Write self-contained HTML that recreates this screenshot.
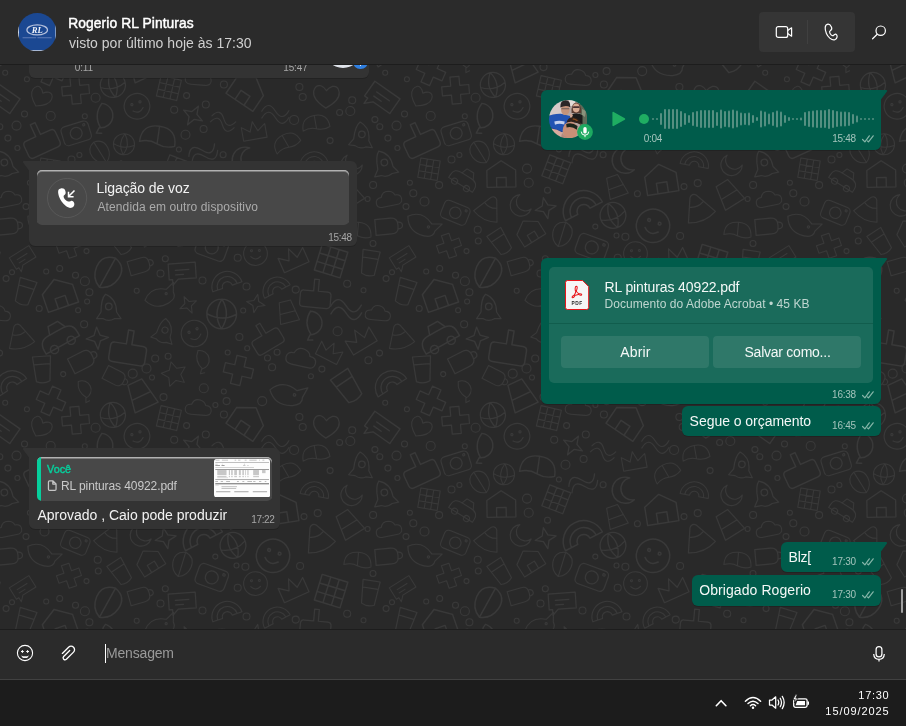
<!DOCTYPE html>
<html lang="pt-BR"><head><meta charset="utf-8"><title>WhatsApp</title>
<style>
html,body{margin:0;padding:0}
body{width:906px;height:726px;overflow:hidden;background:#292929;font-family:"Liberation Sans", sans-serif;position:relative}
.a{position:absolute;display:block}
.t{position:absolute;white-space:nowrap;display:block}
.card{background:#484848;border-radius:5px;box-shadow:inset 0 1px 0 #b2b2b2,inset 0 2px 0 #7c7c7c}
.btn{background:#2f7869;border-radius:4px}
#chat{position:absolute;left:0;top:65px;width:906px;height:564px;overflow:hidden}
#chat>.in{position:absolute;left:0;top:-65px;width:906px;height:726px}
#root{position:absolute;left:0;top:0;width:906px;height:726px;will-change:transform}
</style></head><body>
<div id="root">
<svg class="a" style="left:0;top:65px" width="906" height="564">
<defs><pattern id="dd" width="380" height="330" patternUnits="userSpaceOnUse" patternTransform="translate(-30,-20)">
<g fill="none" stroke="#393939" stroke-width="1.05" stroke-linecap="round" stroke-linejoin="round"><g transform="translate(348.4 163.8) rotate(-23) scale(1.13)"><path d="M-13 8 l10 -20 q3 -3 6 0 l10 20 q-13 6 -26 0z M-6 -4 q6 3 12 0"/></g><g transform="translate(105.6 45.2) rotate(-5) scale(1.13)"><path d="M-4 -12 h8 v8 h8 v8 h-8 v8 h-8 v-8 h-8 v-8 h8z"/></g><g transform="translate(268.4 -4.5) rotate(13) scale(1.20)"><path d="M-4 -12 h8 v8 h8 v8 h-8 v8 h-8 v-8 h-8 v-8 h8z"/></g><g transform="translate(268.4 325.5) rotate(13) scale(1.20)"><path d="M-4 -12 h8 v8 h8 v8 h-8 v8 h-8 v-8 h-8 v-8 h8z"/></g><g transform="translate(69.3 93.0) rotate(-25) scale(1.32)"><path d="M-2 -12 h4 v10 h8 q3 0 3 3 v8 q0 3 -3 3 h-20 q-3 0 -3 -3 v-8 q0 -3 3 -3 h8z"/></g><g transform="translate(231.7 105.1) rotate(-26) scale(1.19)"><path d="M-12 0 q6 -10 12 0 q6 10 12 0 M-12 6 q6 -10 12 0 q6 10 12 0"/></g><g transform="translate(-18.9 216.1) rotate(17) scale(1.34)"><path d="M-10 -10 l20 0 0 20 -20 0z M-10 -3.300 h20 M-10 3.300 h20 M-3.300 -10 v20 M3.300 -10 v20"/></g><g transform="translate(361.1 216.1) rotate(17) scale(1.34)"><path d="M-10 -10 l20 0 0 20 -20 0z M-10 -3.300 h20 M-10 3.300 h20 M-3.300 -10 v20 M3.300 -10 v20"/></g><g transform="translate(331.0 -15.9) rotate(13) scale(1.16)"><path d="M-7 6 q-6 0 -6 -5 q0 -5 6 -5 q2 -6 8 -5 q5 1 6 5 q6 0 6 5 q0 5 -6 5z"/></g><g transform="translate(331.0 314.1) rotate(13) scale(1.16)"><path d="M-7 6 q-6 0 -6 -5 q0 -5 6 -5 q2 -6 8 -5 q5 1 6 5 q6 0 6 5 q0 5 -6 5z"/></g><g transform="translate(151.3 130.1) rotate(-1) scale(1.20)"><path d="M-12 -4 l12 -8 12 8 v14 h-24z M-4 10 v-8 h8 v8"/></g><g transform="translate(72.4 -5.1) rotate(-4) scale(1.13)"><path d="M-8 -12 h16 l-2 22 q-6 3 -12 0z M-7 -5 h14"/></g><g transform="translate(72.4 324.9) rotate(-4) scale(1.13)"><path d="M-8 -12 h16 l-2 22 q-6 3 -12 0z M-7 -5 h14"/></g><g transform="translate(228.3 33.8) rotate(5) scale(1.00)"><path d="M-7 6 q-6 0 -6 -5 q0 -5 6 -5 q2 -6 8 -5 q5 1 6 5 q6 0 6 5 q0 5 -6 5z"/></g><g transform="translate(79.0 124.2) rotate(9) scale(0.98)"><path d="M-10 -10 l20 0 0 20 -20 0z M-10 -3.300 h20 M-10 3.300 h20 M-3.300 -10 v20 M3.300 -10 v20"/></g><g transform="translate(228.9 156.5) rotate(-27) scale(1.38)"><path d="M-15 8 a15 15 0 0 1 30 0 M-10 8 a10 10 0 0 1 20 0 M-5 8 a5 5 0 0 1 10 0 M-15 8 h10 M5 8 h10"/></g><g transform="translate(54.8 247.4) rotate(17) scale(1.09)"><path d="M-8 -12 h16 l-2 22 q-6 3 -12 0z M-7 -5 h14"/></g><g transform="translate(263.0 170.4) rotate(-21) scale(1.17)"><path d="M-11 0 a11 11 0 1 0 22 0 a11 11 0 1 0 -22 0 M-11 0 q11 6 22 0 M0 -11 q-7 11 0 22 M0 -11 q7 11 0 22"/></g><g transform="translate(137.5 227.7) rotate(29) scale(1.38)"><path d="M0 -12 q10 2 9 12 q-1 9 -9 12 q-8 -3 -9 -12 q-1 -10 9 -12z M0 -12 v24"/></g><g transform="translate(135.2 73.5) rotate(3) scale(1.36)"><path d="M-3 -11 a9 9 0 1 1 -1 18 l-2 4 h4 M-3 -11 q-6 9 0 18"/></g><g transform="translate(241.8 202.4) rotate(20) scale(1.18)"><rect x="-13" y="-9" width="26" height="18" rx="4"/><circle r="5.500"/><circle cx="9" cy="-5.500" r="1"/></g><g transform="translate(305.3 66.0) rotate(-1) scale(1.13)"><path d="M-12 0 q6 -10 12 0 q6 10 12 0 M-12 6 q6 -10 12 0 q6 10 12 0"/></g><g transform="translate(-4.0 260.7) rotate(-2) scale(1.28)"><path d="M-12 0 q6 -10 12 0 q6 10 12 0 M-12 6 q6 -10 12 0 q6 10 12 0"/></g><g transform="translate(376.0 260.7) rotate(-2) scale(1.28)"><path d="M-12 0 q6 -10 12 0 q6 10 12 0 M-12 6 q6 -10 12 0 q6 10 12 0"/></g><g transform="translate(274.8 115.3) rotate(33) scale(1.31)"><path d="M-2 -10 a10 10 0 1 0 12 12 a8 8 0 0 1 -12 -12z"/></g><g transform="translate(38.8 155.1) rotate(-11) scale(0.99)"><path d="M-7 6 q-6 0 -6 -5 q0 -5 6 -5 q2 -6 8 -5 q5 1 6 5 q6 0 6 5 q0 5 -6 5z"/></g><g transform="translate(345.5 113.5) rotate(10) scale(0.95)"><path d="M-15 8 a15 15 0 0 1 30 0 M-10 8 a10 10 0 0 1 20 0 M-5 8 a5 5 0 0 1 10 0 M-15 8 h10 M5 8 h10"/></g><g transform="translate(32.3 52.4) rotate(35) scale(1.28)"><path d="M-12 -7 h24 v14 h-16 l-5 5 v-5 h-3z M-6 -1 h12 M-6 3 h7"/></g><g transform="translate(356.2 51.5) rotate(3) scale(1.16)"><path d="M0 10 q-12 -7 -11 -14 q1 -6 6 -5 q3 1 5 4 q2 -3 5 -4 q5 -1 6 5 q1 7 -11 14z"/></g><g transform="translate(303.8 239.7) rotate(-28) scale(0.96)"><path d="M-15 8 a15 15 0 0 1 30 0 M-10 8 a10 10 0 0 1 20 0 M-5 8 a5 5 0 0 1 10 0 M-15 8 h10 M5 8 h10"/></g><g transform="translate(190.4 252.0) rotate(-12) scale(1.05)"><path d="M-15 0 q8 -12 22 -6 l8 -5 -2 9 q2 6 -6 9 q-14 5 -22 -7z"/><circle cx="6" cy="-2" r="1"/></g><g transform="translate(317.0 20.1) rotate(17) scale(1.19)"><path d="M-15 0 q8 -12 22 -6 l8 -5 -2 9 q2 6 -6 9 q-14 5 -22 -7z"/><circle cx="6" cy="-2" r="1"/></g><g transform="translate(317.0 350.1) rotate(17) scale(1.19)"><path d="M-15 0 q8 -12 22 -6 l8 -5 -2 9 q2 6 -6 9 q-14 5 -22 -7z"/><circle cx="6" cy="-2" r="1"/></g><g transform="translate(251.7 269.0) rotate(1) scale(1.35)"><path d="M-11 0 a11 11 0 1 0 22 0 a11 11 0 1 0 -22 0 M-11 0 q11 6 22 0 M0 -11 q-7 11 0 22 M0 -11 q7 11 0 22"/></g><g transform="translate(194.0 288.0) rotate(19) scale(1.02)"><path d="M-3 -14 q10 4 10 16 l4 6 h-6 q-5 3 -10 0 h-6 l4 -6 q0 -12 4 -16z"/><circle cy="-3" r="3"/></g><g transform="translate(295.1 291.5) rotate(-31) scale(1.17)"><path d="M-2 -12 h4 v10 h8 q3 0 3 3 v8 q0 3 -3 3 h-20 q-3 0 -3 -3 v-8 q0 -3 3 -3 h8z"/></g><g transform="translate(10.6 295.0) rotate(-31) scale(1.15)"><path d="M-12 8 v-14 l8 6 4 -10 4 10 8 -6 v14z"/></g><g transform="translate(390.6 295.0) rotate(-31) scale(1.15)"><path d="M-12 8 v-14 l8 6 4 -10 4 10 8 -6 v14z"/></g><g transform="translate(105.3 167.7) rotate(22) scale(1.04)"><rect x="-13" y="-9" width="26" height="18" rx="4"/><circle r="5.500"/><circle cx="9" cy="-5.500" r="1"/></g><g transform="translate(253.8 73.8) rotate(14) scale(1.02)"><path d="M-12 0 q6 -10 12 0 q6 10 12 0 M-12 6 q6 -10 12 0 q6 10 12 0"/></g><g transform="translate(35.0 120.8) rotate(-11) scale(1.11)"><path d="M-3 -14 q10 4 10 16 l4 6 h-6 q-5 3 -10 0 h-6 l4 -6 q0 -12 4 -16z"/><circle cy="-3" r="3"/></g><g transform="translate(112.3 -12.9) rotate(-27) scale(1.18)"><path d="M-10 -8 h14 q6 0 6 6 v2 q0 6 -6 6 h-14z M10 -4 q4 0 4 3 q0 3 -4 3"/></g><g transform="translate(112.3 317.1) rotate(-27) scale(1.18)"><path d="M-10 -8 h14 q6 0 6 6 v2 q0 6 -6 6 h-14z M10 -4 q4 0 4 3 q0 3 -4 3"/></g><g transform="translate(86.9 289.2) rotate(-29) scale(1.36)"><path d="M-14 6 q0 -8 8 -8 h12 q8 0 8 8 v3 h-28z"/><circle cx="-7" cy="9" r="3"/><circle cx="7" cy="9" r="3"/><path d="M-5 -2 l2 -6 h8 l3 6"/></g><g transform="translate(195.6 163.2) rotate(-12) scale(1.19)"><path d="M0 -9 l2.400 6.600 6.600 2.400 -6.600 2.400 -2.400 6.600 -2.400 -6.600 -6.600 -2.400 6.600 -2.400z"/></g><g transform="translate(99.0 200.7) rotate(-19) scale(0.99)"><path d="M-4 -12 h8 v8 h8 v8 h-8 v8 h-8 v-8 h-8 v-8 h8z"/></g><g transform="translate(158.7 302.1) rotate(9) scale(1.40)"><path d="M-2 -12 h4 v10 h8 q3 0 3 3 v8 q0 3 -3 3 h-20 q-3 0 -3 -3 v-8 q0 -3 3 -3 h8z"/></g><g transform="translate(169.4 221.8) rotate(-16) scale(1.04)"><path d="M-10 -8 h14 q6 0 6 6 v2 q0 6 -6 6 h-14z M10 -4 q4 0 4 3 q0 3 -4 3"/></g><g transform="translate(-2.1 12.2) rotate(-34) scale(1.31)"><path d="M-8 -12 h16 l-2 22 q-6 3 -12 0z M-7 -5 h14"/></g><g transform="translate(-2.1 342.2) rotate(-34) scale(1.31)"><path d="M-8 -12 h16 l-2 22 q-6 3 -12 0z M-7 -5 h14"/></g><g transform="translate(377.9 12.2) rotate(-34) scale(1.31)"><path d="M-8 -12 h16 l-2 22 q-6 3 -12 0z M-7 -5 h14"/></g><g transform="translate(377.9 342.2) rotate(-34) scale(1.31)"><path d="M-8 -12 h16 l-2 22 q-6 3 -12 0z M-7 -5 h14"/></g><g transform="translate(277.0 46.1) rotate(34) scale(1.35)"><path d="M-12 -4 l12 -8 12 8 v14 h-24z M-4 10 v-8 h8 v8"/></g><g transform="translate(1.4 120.2) rotate(-12) scale(1.07)"><path d="M-2 -10 a10 10 0 1 0 12 12 a8 8 0 0 1 -12 -12z"/></g><g transform="translate(381.4 120.2) rotate(-12) scale(1.07)"><path d="M-2 -10 a10 10 0 1 0 12 12 a8 8 0 0 1 -12 -12z"/></g><g transform="translate(187.8 93.8) rotate(8) scale(1.27)"><path d="M-14 4 q0 -14 14 -14 q14 0 14 14 q-7 3 -14 0 q-7 -3 -14 0z M0 -10 v14"/></g><g transform="translate(345.8 248.4) rotate(5) scale(1.18)"><path d="M-2 -12 h4 v10 h8 q3 0 3 3 v8 q0 3 -3 3 h-20 q-3 0 -3 -3 v-8 q0 -3 3 -3 h8z"/></g><g transform="translate(89.2 249.6) rotate(-19) scale(1.33)"><path d="M-12 -4 l12 -8 12 8 v14 h-24z M-4 10 v-8 h8 v8"/></g><g transform="translate(284.0 86.4) rotate(-10) scale(0.99)"><path d="M-12 8 v-14 l8 6 4 -10 4 10 8 -6 v14z"/></g><g transform="translate(138.8 164.3) rotate(26) scale(1.00)"><path d="M-13 8 l10 -20 q3 -3 6 0 l10 20 q-13 6 -26 0z M-6 -4 q6 3 12 0"/></g><g transform="translate(142.9 39.9) rotate(-12) scale(1.14)"><path d="M-11 0 a11 11 0 1 0 22 0 a11 11 0 1 0 -22 0 M-11 0 q11 6 22 0 M0 -11 q-7 11 0 22 M0 -11 q7 11 0 22"/></g><g transform="translate(19.6 218.5) rotate(9) scale(1.08)"><path d="M-8 -12 h16 l-2 22 q-6 3 -12 0z M-7 -5 h14"/></g><g transform="translate(204.2 -1.2) rotate(-15) scale(0.95)"><path d="M0 -13 l4 8 9 1 -6.500 6.500 1.500 9 -8 -4.300 -8 4.300 1.500 -9 -6.500 -6.500 9 -1z"/></g><g transform="translate(204.2 328.8) rotate(-15) scale(0.95)"><path d="M0 -13 l4 8 9 1 -6.500 6.500 1.500 9 -8 -4.300 -8 4.300 1.500 -9 -6.500 -6.500 9 -1z"/></g><g transform="translate(106.2 88.3) rotate(-17) scale(1.08)"><rect x="-13" y="-9" width="26" height="18" rx="4"/><circle r="5.500"/><circle cx="9" cy="-5.500" r="1"/></g><g transform="translate(167.0 61.3) rotate(-19) scale(1.07)"><circle r="12"/><path d="M-5 3 q5 5 10 0"/><circle cx="-4" cy="-3" r="1"/><circle cx="4" cy="-3" r="1"/></g><g transform="translate(311.2 135.0) rotate(-9) scale(1.32)"><path d="M-12 -4 l12 -8 12 8 v14 h-24z M-4 10 v-8 h8 v8"/></g><g transform="translate(179.7 186.6) rotate(-32) scale(1.04)"><path d="M-12 -4 l12 -8 12 8 v14 h-24z M-4 10 v-8 h8 v8"/></g><g transform="translate(138.8 264.8) rotate(0) scale(1.11)"><path d="M-3 -14 q10 4 10 16 l4 6 h-6 q-5 3 -10 0 h-6 l4 -6 q0 -12 4 -16z"/><circle cy="-3" r="3"/></g><g transform="translate(50.0 292.3) rotate(-15) scale(1.00)"><path d="M-13 8 l10 -20 q3 -3 6 0 l10 20 q-13 6 -26 0z M-6 -4 q6 3 12 0"/></g><g transform="translate(233.8 -13.9) rotate(-14) scale(1.05)"><path d="M-3 -11 a9 9 0 1 1 -1 18 l-2 4 h4 M-3 -11 q-6 9 0 18"/></g><g transform="translate(233.8 316.1) rotate(-14) scale(1.05)"><path d="M-3 -11 a9 9 0 1 1 -1 18 l-2 4 h4 M-3 -11 q-6 9 0 18"/></g><g transform="translate(171.3 21.0) rotate(-25) scale(1.27)"><path d="M-10 10 l4 -22 h12 l4 22z M-8 0 h16"/></g><g transform="translate(70.5 52.5) rotate(29) scale(0.96)"><path d="M0 10 q-12 -7 -11 -14 q1 -6 6 -5 q3 1 5 4 q2 -3 5 -4 q5 -1 6 5 q1 7 -11 14z"/></g><g transform="translate(52.6 212.4) rotate(-32) scale(0.96)"><path d="M-12 -7 h24 v14 h-16 l-5 5 v-5 h-3z M-6 -1 h12 M-6 3 h7"/></g><g transform="translate(285.5 208.6) rotate(-2) scale(0.99)"><circle r="12"/><path d="M-5 3 q5 5 10 0"/><circle cx="-4" cy="-3" r="1"/><circle cx="4" cy="-3" r="1"/></g><g transform="translate(115.3 132.2) rotate(32) scale(1.00)"><path d="M-14 6 q0 -8 8 -8 h12 q8 0 8 8 v3 h-28z"/><circle cx="-7" cy="9" r="3"/><circle cx="7" cy="9" r="3"/><path d="M-5 -2 l2 -6 h8 l3 6"/></g><g transform="translate(81.0 25.9) rotate(24) scale(1.17)"><path d="M-4 -12 h8 v8 h8 v8 h-8 v8 h-8 v-8 h-8 v-8 h8z"/></g><g transform="translate(7.7 186.9) rotate(5) scale(0.97)"><path d="M-14 4 q0 -14 14 -14 q14 0 14 14 q-7 3 -14 0 q-7 -3 -14 0z M0 -10 v14"/></g><g transform="translate(387.7 186.9) rotate(5) scale(0.97)"><path d="M-14 4 q0 -14 14 -14 q14 0 14 14 q-7 3 -14 0 q-7 -3 -14 0z M0 -10 v14"/></g><g transform="translate(303.0 180.8) rotate(19) scale(1.39)"><circle r="12"/><path d="M-5 3 q5 5 10 0"/><circle cx="-4" cy="-3" r="1"/><circle cx="4" cy="-3" r="1"/></g><g transform="translate(11.5 92.6) rotate(7) scale(1.09)"><path d="M-3 -14 q10 4 10 16 l4 6 h-6 q-5 3 -10 0 h-6 l4 -6 q0 -12 4 -16z"/><circle cy="-3" r="3"/></g><g transform="translate(391.5 92.6) rotate(7) scale(1.09)"><path d="M-3 -14 q10 4 10 16 l4 6 h-6 q-5 3 -10 0 h-6 l4 -6 q0 -12 4 -16z"/><circle cy="-3" r="3"/></g><g transform="translate(223.0 70.5) rotate(30) scale(1.20)"><path d="M0 -9 l2.400 6.600 6.600 2.400 -6.600 2.400 -2.400 6.600 -2.400 -6.600 -6.600 -2.400 6.600 -2.400z"/></g><g transform="translate(-0.9 149.7) rotate(-32) scale(1.13)"><path d="M-10 10 l4 -22 h12 l4 22z M-8 0 h16"/></g><g transform="translate(379.1 149.7) rotate(-32) scale(1.13)"><path d="M-10 10 l4 -22 h12 l4 22z M-8 0 h16"/></g><g transform="translate(71.7 180.2) rotate(33) scale(1.10)"><path d="M-15 0 q8 -12 22 -6 l8 -5 -2 9 q2 6 -6 9 q-14 5 -22 -7z"/><circle cx="6" cy="-2" r="1"/></g><g transform="translate(37.4 5.1) rotate(-33) scale(1.13)"><path d="M-15 8 a15 15 0 0 1 30 0 M-10 8 a10 10 0 0 1 20 0 M-5 8 a5 5 0 0 1 10 0 M-15 8 h10 M5 8 h10"/></g><g transform="translate(37.4 335.1) rotate(-33) scale(1.13)"><path d="M-15 8 a15 15 0 0 1 30 0 M-10 8 a10 10 0 0 1 20 0 M-5 8 a5 5 0 0 1 10 0 M-15 8 h10 M5 8 h10"/></g><g transform="translate(144.0 2.5) rotate(27) scale(1.03)"><path d="M-10 -8 h14 q6 0 6 6 v2 q0 6 -6 6 h-14z M10 -4 q4 0 4 3 q0 3 -4 3"/></g><g transform="translate(144.0 332.5) rotate(27) scale(1.03)"><path d="M-10 -8 h14 q6 0 6 6 v2 q0 6 -6 6 h-14z M10 -4 q4 0 4 3 q0 3 -4 3"/></g><g transform="translate(254.7 234.0) rotate(-19) scale(1.03)"><path d="M-15 8 a15 15 0 0 1 30 0 M-10 8 a10 10 0 0 1 20 0 M-5 8 a5 5 0 0 1 10 0 M-15 8 h10 M5 8 h10"/></g><g transform="translate(345.9 80.0) rotate(-10) scale(0.97)"><path d="M-14 4 q0 -14 14 -14 q14 0 14 14 q-7 3 -14 0 q-7 -3 -14 0z M0 -10 v14"/></g><g transform="translate(27.9 269.4) rotate(5) scale(0.97)"><path d="M-7 6 q-6 0 -6 -5 q0 -5 6 -5 q2 -6 8 -5 q5 1 6 5 q6 0 6 5 q0 5 -6 5z"/></g><g transform="translate(212.2 226.0) rotate(-4) scale(1.13)"><path d="M-12 -7 h24 v14 h-16 l-5 5 v-5 h-3z M-6 -1 h12 M-6 3 h7"/></g><g transform="translate(323.1 214.1) rotate(-24) scale(1.12)"><path d="M-12 8 v-14 l8 6 4 -10 4 10 8 -6 v14z"/></g><g transform="translate(317.0 98.8) rotate(-30) scale(0.97)"><path d="M-14 4 q0 -14 14 -14 q14 0 14 14 q-7 3 -14 0 q-7 -3 -14 0z M0 -10 v14"/></g><g transform="translate(317.7 267.7) rotate(-14) scale(0.97)"><path d="M-10 10 l4 -22 h12 l4 22z M-8 0 h16"/></g><g transform="translate(206.3 124.3) rotate(21) scale(1.12)"><path d="M-10 -10 l20 0 0 20 -20 0z M-10 -3.300 h20 M-10 3.300 h20 M-3.300 -10 v20 M3.300 -10 v20"/></g><g transform="translate(116.1 15.0) rotate(-28) scale(1.01)"><path d="M-3 -11 a9 9 0 1 1 -1 18 l-2 4 h4 M-3 -11 q-6 9 0 18"/></g><g transform="translate(198.9 43.1) rotate(13) scale(1.04)"><path d="M-10 -10 l20 0 0 20 -20 0z M-10 -3.300 h20 M-10 3.300 h20 M-3.300 -10 v20 M3.300 -10 v20"/></g><g transform="translate(266.0 142.2) rotate(-20) scale(0.96)"><path d="M-10 10 l4 -22 h12 l4 22z M-8 0 h16"/></g><g transform="translate(224.4 288.5) rotate(-25) scale(1.10)"><circle r="12"/><path d="M-5 3 q5 5 10 0"/><circle cx="-4" cy="-3" r="1"/><circle cx="4" cy="-3" r="1"/></g><g transform="translate(359.6 307.0) rotate(27) scale(0.99)"><path d="M-12 8 v-14 l8 6 4 -10 4 10 8 -6 v14z"/></g><g transform="translate(344.9 280.5) rotate(-2) scale(1.31)"><path d="M-3 -11 a9 9 0 1 1 -1 18 l-2 4 h4 M-3 -11 q-6 9 0 18"/></g><g transform="translate(218.1 259.8) rotate(-26) scale(1.02)"><path d="M0 -9 l2.400 6.600 6.600 2.400 -6.600 2.400 -2.400 6.600 -2.400 -6.600 -6.600 -2.400 6.600 -2.400z"/></g><g transform="translate(285.8 258.5) rotate(12) scale(1.04)"><path d="M0 -9 l2.400 6.600 6.600 2.400 -6.600 2.400 -2.400 6.600 -2.400 -6.600 -6.600 -2.400 6.600 -2.400z"/></g><g transform="translate(154.0 99.3) rotate(5) scale(0.96)"><path d="M-11 0 a11 11 0 1 0 22 0 a11 11 0 1 0 -22 0 M-11 0 q11 6 22 0 M0 -11 q-7 11 0 22 M0 -11 q7 11 0 22"/></g><g transform="translate(36.8 182.6) rotate(-5) scale(1.13)"><path d="M-10 -8 h14 q6 0 6 6 v2 q0 6 -6 6 h-14z M10 -4 q4 0 4 3 q0 3 -4 3"/></g><g transform="translate(127.3 293.2) rotate(-4) scale(1.24)"><path d="M0 -9 l2.400 6.600 6.600 2.400 -6.600 2.400 -2.400 6.600 -2.400 -6.600 -6.600 -2.400 6.600 -2.400z"/></g><g transform="translate(150.6 197.4) rotate(-33) scale(1.04)"><path d="M-8 -12 h16 l-2 22 q-6 3 -12 0z M-7 -5 h14"/></g><g transform="translate(212.0 189.4) rotate(17) scale(1.05)"><path d="M0 -12 q10 2 9 12 q-1 9 -9 12 q-8 -3 -9 -12 q-1 -10 9 -12z M0 -12 v24"/></g><g transform="translate(130.1 107.3) rotate(-32) scale(1.00)"><path d="M0 -12 q10 2 9 12 q-1 9 -9 12 q-8 -3 -9 -12 q-1 -10 9 -12z M0 -12 v24"/></g><g transform="translate(170.7 160.6) rotate(7) scale(1.08)"><path d="M-2 -10 a10 10 0 1 0 12 12 a8 8 0 0 1 -12 -12z"/></g><circle cx="176.5" cy="323.4" r="4.5"/><circle cx="35.2" cy="27.7" r="2.5"/><circle cx="101.5" cy="114.5" r="3.5"/><circle cx="59.9" cy="137.7" r="2.5"/><circle cx="74.5" cy="156.4" r="4.5"/><circle cx="233.6" cy="83.9" r="3.5"/><circle cx="367.6" cy="286.3" r="4.5"/><circle cx="275.4" cy="191.8" r="3.5"/><circle cx="253.9" cy="39.4" r="3.5"/><circle cx="197.5" cy="145.3" r="3"/><circle cx="182.0" cy="2.5" r="2.5"/><circle cx="182.0" cy="332.5" r="2.5"/><circle cx="233.8" cy="13.2" r="4.5"/><circle cx="204.2" cy="64.7" r="3.5"/><circle cx="277.2" cy="303.3" r="2.5"/><circle cx="245.3" cy="181.6" r="2.5"/><circle cx="302.1" cy="322.3" r="3.5"/><circle cx="198.1" cy="311.2" r="3"/><circle cx="119.4" cy="247.2" r="3.5"/><circle cx="127.7" cy="184.8" r="3.5"/><circle cx="29.5" cy="308.1" r="3"/><circle cx="89.7" cy="223.4" r="3"/><circle cx="24.9" cy="74.6" r="3"/><circle cx="347.7" cy="138.1" r="3.5"/><circle cx="190.5" cy="228.4" r="3.5"/><circle cx="360.1" cy="95.6" r="3"/><circle cx="116.5" cy="206.1" r="2.5"/><circle cx="114.1" cy="279.3" r="3.5"/><circle cx="208.9" cy="104.4" r="2.5"/><circle cx="114.8" cy="71.2" r="2.5"/><circle cx="69.2" cy="263.4" r="3"/><circle cx="193.5" cy="22.1" r="3.5"/><circle cx="76.2" cy="226.4" r="2.5"/><circle cx="54.5" cy="68.9" r="3"/><circle cx="332.7" cy="51.9" r="3.5"/><circle cx="36.1" cy="233.6" r="3"/><circle cx="-2.8" cy="238.7" r="3.5"/><circle cx="377.2" cy="238.7" r="3.5"/><circle cx="166.7" cy="245.7" r="2.5"/><circle cx="256.6" cy="26.1" r="3.5"/><circle cx="46.5" cy="80.6" r="4.5"/><circle cx="253.1" cy="109.8" r="3"/><circle cx="105.5" cy="230.2" r="3"/><circle cx="93.2" cy="-0.9" r="2.5"/><circle cx="93.2" cy="329.1" r="2.5"/><circle cx="185.2" cy="313.5" r="3.5"/><circle cx="232.5" cy="235.4" r="3.5"/><circle cx="334.0" cy="141.6" r="3"/><circle cx="253.8" cy="16.4" r="2.5"/><circle cx="114.9" cy="236.2" r="4.5"/><circle cx="257.7" cy="307.4" r="2.5"/><circle cx="80.7" cy="70.9" r="4.5"/><circle cx="215.5" cy="89.7" r="4.5"/><circle cx="216.6" cy="50.6" r="3"/><circle cx="47.4" cy="103.0" r="2.5"/><circle cx="235.8" cy="59.4" r="3.5"/><circle cx="56.0" cy="161.6" r="3"/><circle cx="2.2" cy="55.2" r="3.5"/><circle cx="382.2" cy="55.2" r="3.5"/><circle cx="128.3" cy="195.9" r="3"/><circle cx="267.7" cy="212.7" r="3.5"/><circle cx="351.9" cy="324.1" r="3"/><circle cx="340.9" cy="1.3" r="2.5"/><circle cx="340.9" cy="331.3" r="2.5"/><circle cx="324.1" cy="74.9" r="4.5"/><circle cx="29.8" cy="81.7" r="3"/><circle cx="273.2" cy="265.4" r="2.5"/><circle cx="195.3" cy="213.7" r="3"/><circle cx="307.1" cy="307.3" r="3"/><circle cx="109.4" cy="109.9" r="2.5"/><circle cx="276.5" cy="241.4" r="3.5"/><circle cx="292.2" cy="26.1" r="4.5"/><circle cx="13.5" cy="245.3" r="2.5"/><circle cx="117.1" cy="256.5" r="2.5"/><circle cx="330.1" cy="191.0" r="3.5"/><circle cx="287.4" cy="148.8" r="3"/><circle cx="369.6" cy="67.4" r="3"/><circle cx="245.4" cy="30.0" r="2.5"/><circle cx="23.1" cy="139.9" r="3.5"/><circle cx="177.0" cy="123.6" r="4.5"/><circle cx="108.1" cy="265.2" r="2.5"/><circle cx="266.5" cy="190.4" r="2.5"/><circle cx="297.5" cy="313.0" r="3"/><circle cx="162.7" cy="-1.4" r="4.5"/><circle cx="162.7" cy="328.6" r="4.5"/><circle cx="125.6" cy="52.7" r="4.5"/><circle cx="0.3" cy="66.0" r="4.5"/><circle cx="380.3" cy="66.0" r="4.5"/><circle cx="269.4" cy="292.0" r="3.5"/><circle cx="42.0" cy="227.2" r="2.5"/><circle cx="17.6" cy="154.0" r="2.5"/><circle cx="56.9" cy="34.2" r="2.5"/><circle cx="37.9" cy="93.1" r="3"/><circle cx="178.7" cy="137.8" r="4.5"/><circle cx="329.4" cy="42.0" r="3.5"/><circle cx="18.4" cy="315.2" r="3.5"/><circle cx="23.0" cy="198.4" r="3"/><circle cx="325.7" cy="244.6" r="3.5"/><circle cx="63.3" cy="148.3" r="3.5"/><circle cx="89.1" cy="140.1" r="3.5"/></g></pattern></defs>
<rect width="906" height="564" fill="url(#dd)"/></svg>
<div id="chat"><div class="in">
<div class="a" style="left:29px;top:40px;width:340px;height:38px;background:#333333;border-radius:0 0 6px 6px;box-shadow:0 1px 0 rgba(0,0,0,.16)"></div>
<span id="t011" class="t" style="left:74.75px;top:61px;font-size:10px;line-height:13px;color:#a6a6a6;font-weight:400;letter-spacing:-0.167px;">0:11</span>
<span id="t1547" class="t" style="left:283.25px;top:61px;font-size:10px;line-height:13px;color:#a6a6a6;font-weight:400;letter-spacing:-0.125px;">15:47</span>
<div class="a" style="left:324px;top:30px;width:38px;height:38px;border-radius:50%;background:#dfe3ea"></div>
<div class="a" style="left:353px;top:54px;width:14.5px;height:14.5px;border-radius:50%;background:#2f7fe0"></div>
<div class="a" style="left:359.5px;top:63px;width:1.5px;height:3px;background:#e8f0ff"></div>
<svg class="a bub" style="left:541px;top:90px" width="348" height="62" viewBox="0 0 348 62"><path d="M0 54 V55 A6 6 0 0 0 6 61 H334 A6 6 0 0 0 340 55 V54Z" fill="rgba(0,0,0,.16)"/><path d="M6 0 H345 Q346.8 0 345.9 1.5 L340 9.5 V54 A6 6 0 0 1 334 60 H6 A6 6 0 0 1 0 54 V6 A6 6 0 0 1 6 0Z" fill="#005c4b"/></svg>
<svg class="a" style="left:548.8px;top:99.8px" width="38.4" height="38.4" viewBox="0 0 38.4 38.4">
<defs><clipPath id="avc"><circle cx="19.2" cy="19.2" r="19.2"/></clipPath><filter id="avb" x="-10%" y="-10%" width="120%" height="120%"><feGaussianBlur stdDeviation=".55"/></filter></defs>
<g clip-path="url(#avc)"><g filter="url(#avb)">
<rect x="-2" y="-2" width="43" height="43" fill="#b4a6a2"/>
<rect x="-2" y="-2" width="16" height="17" fill="#d6cac8"/>
<rect x="20" y="-2" width="6" height="8" fill="#e4dcd8"/>
<path d="M30 4 H41 V27 H31Z" fill="#5f6a58"/>
<path d="M33 9 l4 2 -1 6 -3 -2z" fill="#8a927c"/>
<path d="M-2 17 Q4 13.500 12 13.800 L21 16 L21 27 L15 32 L-2 27Z" fill="#2452b3"/>
<path d="M1 27 L14 31.500 L12 33 L0 29Z" fill="#1c3f8e"/>
<path d="M5.300 21.500 Q10 19.800 15.700 21.500 L15.200 24.600 Q10 23 6 24.800Z" fill="#c4d0ee"/>
<ellipse cx="16.300" cy="9.600" rx="4.300" ry="5.400" fill="#c4937a"/>
<path d="M11.300 7.600 Q10.800 .4 16.500 .2 Q21.800 .3 21.200 7.300 Q17 4.600 11.300 7.600Z" fill="#2b2526"/>
<path d="M12.400 8.200 h7.800 v1.100 h-7.800z" fill="#6a5a55"/>
<path d="M22.600 13 Q21.800 3 27.200 2.400 Q32.600 2.600 32.200 13 Z" fill="#5b3c31"/>
<ellipse cx="27.200" cy="8" rx="3.400" ry="4.400" fill="#d8aa92"/>
<rect x="24" y="6.200" width="6.600" height="1.900" rx=".9" fill="#4a3030"/>
<path d="M23 14.500 Q28 11.800 33.500 15.500 L33.500 24 L23.500 22Z" fill="#1c1a1b"/>
<path d="M21 13.500 l3 1.500 -2 4z" fill="#d3a690"/>
<ellipse cx="21.300" cy="30.500" rx="7.600" ry="9" fill="#c98f77"/>
<path d="M17.500 22.500 Q19 16.500 26 17.500 Q31.500 19 31.500 24.500 Q24.500 20.500 17.500 22.500Z" fill="#33241a"/>
<path d="M24 18.200 q3 .3 5 2.200 l-1 .8 q-2-1.500-4.500-1.800z" fill="#8a4a1c"/>
<path d="M17.200 24 Q23 21.800 28.600 26 L27.800 29.800 Q23 26 17.600 27.600Z" fill="#1f261f"/>
<path d="M2.300 28.500 Q8 29 13.500 32.500 L11 38 L3 35Z" fill="#d9ab9e"/>
<path d="M13 33 q2 3 5 4 l-1 2 h-5z" fill="#b98a7c"/>
</g></g></svg>
<svg class="a" style="left:577px;top:124px" width="16" height="16" viewBox="0 0 16 16">
<circle cx="8" cy="8" r="7.9" fill="#1daa61"/>
<rect x="6.3" y="3" width="3.4" height="6.6" rx="1.7" fill="#fff"/>
<path d="M4.3 7.6 Q4.3 11.2 8 11.2 Q11.7 11.2 11.7 7.6" fill="none" stroke="#fff" stroke-width="1"/>
<path d="M8 11.2 V13.2" stroke="#fff" stroke-width="1"/></svg>
<svg class="a" style="left:611px;top:110px" width="16" height="18" viewBox="0 0 16 18"><path d="M2.2 2.6 L13.4 9 L2.2 15.4Z" fill="#1fad62" stroke="#1fad62" stroke-width="1.6" stroke-linejoin="round"/></svg>
<div class="a" style="left:639px;top:114px;width:10px;height:10px;border-radius:50%;background:#1fad62"></div>
<svg class="a" style="left:650px;top:106px" width="230" height="26" viewBox="0 0 230 26"><rect x="2.0" y="12.0" width="2" height="2" rx="1" fill="#558f81"/><rect x="6.0" y="12.0" width="2" height="2" rx="1" fill="#558f81"/><rect x="10.0" y="7.0" width="2" height="12" rx="1" fill="#558f81"/><rect x="14.0" y="3.0" width="2" height="20" rx="1" fill="#558f81"/><rect x="18.0" y="3.0" width="2" height="20" rx="1" fill="#558f81"/><rect x="22.0" y="3.0" width="2" height="20" rx="1" fill="#558f81"/><rect x="26.0" y="3.0" width="2" height="20" rx="1" fill="#558f81"/><rect x="30.0" y="5.0" width="2" height="16" rx="1" fill="#558f81"/><rect x="34.0" y="7.0" width="2" height="12" rx="1" fill="#558f81"/><rect x="38.0" y="9.0" width="2" height="8" rx="1" fill="#558f81"/><rect x="42.0" y="6.0" width="2" height="14" rx="1" fill="#558f81"/><rect x="46.0" y="5.0" width="2" height="16" rx="1" fill="#558f81"/><rect x="50.0" y="4.0" width="2" height="18" rx="1" fill="#558f81"/><rect x="54.0" y="4.0" width="2" height="18" rx="1" fill="#558f81"/><rect x="58.0" y="4.0" width="2" height="18" rx="1" fill="#558f81"/><rect x="62.0" y="4.0" width="2" height="18" rx="1" fill="#558f81"/><rect x="66.0" y="6.0" width="2" height="14" rx="1" fill="#558f81"/><rect x="70.0" y="3.5" width="2" height="19" rx="1" fill="#558f81"/><rect x="74.0" y="5.0" width="2" height="16" rx="1" fill="#558f81"/><rect x="78.0" y="4.5" width="2" height="17" rx="1" fill="#558f81"/><rect x="82.0" y="3.5" width="2" height="19" rx="1" fill="#558f81"/><rect x="86.0" y="4.5" width="2" height="17" rx="1" fill="#558f81"/><rect x="90.0" y="6.5" width="2" height="13" rx="1" fill="#558f81"/><rect x="94.0" y="7.0" width="2" height="12" rx="1" fill="#558f81"/><rect x="98.0" y="6.5" width="2" height="13" rx="1" fill="#558f81"/><rect x="102.0" y="9.0" width="2" height="8" rx="1" fill="#558f81"/><rect x="106.0" y="11.0" width="2" height="4" rx="1" fill="#558f81"/><rect x="110.0" y="4.5" width="2" height="17" rx="1" fill="#558f81"/><rect x="114.0" y="5.5" width="2" height="15" rx="1" fill="#558f81"/><rect x="118.0" y="7.5" width="2" height="11" rx="1" fill="#558f81"/><rect x="122.0" y="6.0" width="2" height="14" rx="1" fill="#558f81"/><rect x="126.0" y="4.5" width="2" height="17" rx="1" fill="#558f81"/><rect x="130.0" y="5.5" width="2" height="15" rx="1" fill="#558f81"/><rect x="134.0" y="9.0" width="2" height="8" rx="1" fill="#558f81"/><rect x="138.0" y="11.0" width="2" height="4" rx="1" fill="#558f81"/><rect x="142.0" y="12.0" width="2" height="2" rx="1" fill="#558f81"/><rect x="146.0" y="12.0" width="2" height="2" rx="1" fill="#558f81"/><rect x="150.0" y="11.5" width="2" height="3" rx="1" fill="#558f81"/><rect x="154.0" y="6.0" width="2" height="14" rx="1" fill="#558f81"/><rect x="158.0" y="5.0" width="2" height="16" rx="1" fill="#558f81"/><rect x="162.0" y="4.5" width="2" height="17" rx="1" fill="#558f81"/><rect x="166.0" y="4.0" width="2" height="18" rx="1" fill="#558f81"/><rect x="170.0" y="4.0" width="2" height="18" rx="1" fill="#558f81"/><rect x="174.0" y="4.0" width="2" height="18" rx="1" fill="#558f81"/><rect x="178.0" y="3.0" width="2" height="20" rx="1" fill="#558f81"/><rect x="182.0" y="4.0" width="2" height="18" rx="1" fill="#558f81"/><rect x="186.0" y="5.0" width="2" height="16" rx="1" fill="#558f81"/><rect x="190.0" y="5.5" width="2" height="15" rx="1" fill="#558f81"/><rect x="194.0" y="5.5" width="2" height="15" rx="1" fill="#558f81"/><rect x="198.0" y="6.0" width="2" height="14" rx="1" fill="#558f81"/><rect x="202.0" y="8.0" width="2" height="10" rx="1" fill="#558f81"/><rect x="206.0" y="9.5" width="2" height="7" rx="1" fill="#558f81"/><rect x="210.0" y="12.0" width="2" height="2" rx="1" fill="#558f81"/><rect x="214.0" y="12.0" width="2" height="2" rx="1" fill="#558f81"/><rect x="218.0" y="12.0" width="2" height="2" rx="1" fill="#558f81"/><rect x="222.0" y="12.0" width="2" height="2" rx="1" fill="#558f81"/></svg>
<span id="t004" class="t" style="left:643.85px;top:132px;font-size:10px;line-height:13px;color:#a3c4bc;font-weight:400;letter-spacing:-0.350px;">0:04</span>
<span id="t1548a" class="t" style="left:832.25px;top:132px;font-size:10px;line-height:13px;color:#a3c4bc;font-weight:400;letter-spacing:-0.312px;">15:48</span>
<svg class="a" style="left:861.5px;top:134.5px" width="13" height="8" viewBox="0 0 13 8"><path d="M0.6 4.5 L2.9 6.8 L7.3 0.8 M5.5 6 L6.5 6.8 L11.2 0.8" fill="none" stroke="#86b6a9" stroke-width="1.2" stroke-linecap="round" stroke-linejoin="round"/></svg>
<svg class="a bub" style="left:21px;top:161px" width="336" height="87" viewBox="0 0 336 87"><path d="M8 79 V80 A6 6 0 0 0 14 86 H330 A6 6 0 0 0 336 80 V79Z" fill="rgba(0,0,0,.16)"/><path d="M3 0 H330 A6 6 0 0 1 336 6 V79 A6 6 0 0 1 330 85 H14 A6 6 0 0 1 8 79 V9.5 L2.0999999999999996 1.5 Q1.2000000000000002 0 3 0Z" fill="#333333"/></svg>
<div class="a card" style="left:37px;top:170px;width:312px;height:55px"></div>
<svg class="a" style="left:44px;top:175px" width="48" height="46" viewBox="0 0 48 46">
<circle cx="23.1" cy="23" r="19.6" fill="none" stroke="#585858" stroke-width="1"/>
<path d="M16.8 13.4 C19.2 13 20.6 13.8 21.2 15.6 C21.8 17.2 21.9 18.6 21 19.6 C19.6 20.6 19.4 21.2 19.8 22.4 C20.6 24.4 22.4 26 24.2 26.5 C25.4 26.8 26 26.2 27 25.9 C28.6 25.6 29.8 26.6 30.3 28.4 C30.7 30.4 29.4 32.2 27.4 32.8 C25.6 33.2 23.8 32.4 21.6 30.8 C18.6 28.4 16.2 25 14.9 21.2 C14.1 18.6 13.9 16.4 14.4 15 C14.9 13.9 15.7 13.5 16.8 13.4Z" fill="#fff"/>
<path d="M30.5 15.4 L24.5 21.6 M24.5 16.8 V21.7 H29.6" fill="none" stroke="#fff" stroke-width="1.5" stroke-linecap="butt" stroke-linejoin="miter"/>
</svg>
<span id="lig" class="t" style="left:96.50px;top:179px;font-size:14px;line-height:18px;color:#f2f2f2;font-weight:400;letter-spacing:-0.077px;">Ligação de voz</span>
<span id="atend" class="t" style="left:97.50px;top:199px;font-size:12px;line-height:16px;color:#ababab;font-weight:400;letter-spacing:0.107px;">Atendida em outro dispositivo</span>
<span id="t1548b" class="t" style="left:328.25px;top:231px;font-size:10px;line-height:13px;color:#a6a6a6;font-weight:400;letter-spacing:-0.312px;">15:48</span>
<svg class="a bub" style="left:541px;top:258px" width="348" height="148" viewBox="0 0 348 148"><path d="M0 140 V141 A6 6 0 0 0 6 147 H334 A6 6 0 0 0 340 141 V140Z" fill="rgba(0,0,0,.16)"/><path d="M6 0 H345 Q346.8 0 345.9 1.5 L340 9.5 V140 A6 6 0 0 1 334 146 H6 A6 6 0 0 1 0 140 V6 A6 6 0 0 1 6 0Z" fill="#005c4b"/></svg>
<div class="a" style="left:549px;top:267px;width:324px;height:116px;border-radius:5px;background:#1a6b5b"></div>
<div class="a" style="left:549px;top:323px;width:324px;height:1px;background:#115d4d"></div>
<svg class="a" style="left:564px;top:279px" width="26" height="32" viewBox="0 0 26 32">
<path d="M3.500 1.500 H18.600 L24.700 7.600 V28.500 Q24.700 30.500 22.700 30.500 H3.500 Q1.500 30.500 1.500 28.500 V3.500 Q1.500 1.500 3.500 1.500Z" fill="#f6f6f6" stroke="#e8161b" stroke-width="1"/>
<path transform="translate(12.4 13.2) scale(.82) translate(-12.6 -14.6)" d="M12.500 7.500 q1.400 0 1 2.200 q-.5 2.500-1 3.600 q1.200 2.300 3.200 3.200 q2.800-.3 3.300.7 q.3 1.300-1.500 1.100 q-1.300-.2-2.600-1 q-2.200.4-4 1.200 q-1.500 2.900-2.800 2.900 q-1.300-.3-.3-1.700 q.8-1 2.300-1.600 q1.100-2.100 1.700-4 q-.9-2-.7-4.300 q.200-2.300 1.400-2.300Z" fill="none" stroke="#e8161b" stroke-width="1.250"/>
<text x="7.600" y="25.800" font-family="Liberation Sans, sans-serif" font-weight="700" font-size="4.800" fill="#2a2a2a" letter-spacing=".5">PDF</text>
</svg>
<span id="doct" class="t" style="left:604.50px;top:278px;font-size:14px;line-height:18px;color:#f4f8f7;font-weight:400;letter-spacing:-0.113px;">RL pinturas 40922.pdf</span>
<span id="docs" class="t" style="left:604.50px;top:296px;font-size:12px;line-height:16px;color:#bfd6d0;font-weight:400;letter-spacing:0.061px;">Documento do Adobe Acrobat • 45 KB</span>
<div class="a btn" style="left:561px;top:336px;width:148px;height:32px"></div>
<div class="a btn" style="left:713px;top:336px;width:148px;height:32px"></div>
<span id="abrir" class="t" style="left:620.30px;top:343px;font-size:14px;line-height:18px;color:#f4f8f7;font-weight:400;letter-spacing:0.125px;">Abrir</span>
<span id="salvar" class="t" style="left:744.50px;top:343px;font-size:14px;line-height:18px;color:#f4f8f7;font-weight:400;letter-spacing:-0.246px;">Salvar como...</span>
<span id="t1638" class="t" style="left:832.10px;top:388px;font-size:10px;line-height:13px;color:#a3c4bc;font-weight:400;letter-spacing:-0.237px;">16:38</span>
<svg class="a" style="left:861.5px;top:391px" width="13" height="8" viewBox="0 0 13 8"><path d="M0.6 4.5 L2.9 6.8 L7.3 0.8 M5.5 6 L6.5 6.8 L11.2 0.8" fill="none" stroke="#86b6a9" stroke-width="1.2" stroke-linecap="round" stroke-linejoin="round"/></svg>
<svg class="a bub" style="left:682px;top:406px" width="207" height="32" viewBox="0 0 207 32"><path d="M0 24 V25 A6 6 0 0 0 6 31 H193 A6 6 0 0 0 199 25 V24Z" fill="rgba(0,0,0,.16)"/><path d="M6 0 H193 A6 6 0 0 1 199 6 V24 A6 6 0 0 1 193 30 H6 A6 6 0 0 1 0 24 V6 A6 6 0 0 1 6 0Z" fill="#005c4b"/></svg>
<span id="segue" class="t" style="left:689.60px;top:412px;font-size:14px;line-height:18px;color:#f4f8f7;font-weight:400;letter-spacing:-0.040px;">Segue o orçamento</span>
<span id="t1645" class="t" style="left:832.10px;top:419px;font-size:10px;line-height:13px;color:#a3c4bc;font-weight:400;letter-spacing:-0.237px;">16:45</span>
<svg class="a" style="left:861.5px;top:422px" width="13" height="8" viewBox="0 0 13 8"><path d="M0.6 4.5 L2.9 6.8 L7.3 0.8 M5.5 6 L6.5 6.8 L11.2 0.8" fill="none" stroke="#86b6a9" stroke-width="1.2" stroke-linecap="round" stroke-linejoin="round"/></svg>
<svg class="a bub" style="left:21px;top:448px" width="259" height="83" viewBox="0 0 259 83"><path d="M8 75 V76 A6 6 0 0 0 14 82 H253 A6 6 0 0 0 259 76 V75Z" fill="rgba(0,0,0,.16)"/><path d="M3 0 H253 A6 6 0 0 1 259 6 V75 A6 6 0 0 1 253 81 H14 A6 6 0 0 1 8 75 V9.5 L2.0999999999999996 1.5 Q1.2000000000000002 0 3 0Z" fill="#333333"/></svg>
<div class="a card" style="left:37px;top:457px;width:235px;height:43.5px;overflow:hidden"><div style="position:absolute;left:0;top:-1px;width:4px;height:46px;background:#06cf9c"></div></div>
<span id="voce" class="t" style="left:47.10px;top:462px;font-size:10.8px;line-height:14px;color:#06cf9c;font-weight:400;letter-spacing:0.000px;-webkit-text-stroke:.4px #06cf9c;">Você</span>
<svg class="a" style="left:47px;top:480px" width="11" height="12" viewBox="0 0 11 12">
<path d="M2.600 .85 H6 L9.050 3.900 V9.200 Q9.050 10.350 7.900 10.350 H2.600 Q1.450 10.350 1.450 9.200 V2 Q1.450 .85 2.600 .85Z M5.800 1 V4.100 H8.900" fill="none" stroke="#c6c6c6" stroke-width="1.250" stroke-linejoin="round"/></svg>
<span id="qdoc" class="t" style="left:61.00px;top:478px;font-size:12px;line-height:16px;color:#c9c9c9;font-weight:400;letter-spacing:-0.087px;">RL pinturas 40922.pdf</span>
<svg class="a" style="left:214px;top:458.8px" width="56.2" height="38.4" viewBox="0 0 56.2 38.4"><rect width="56.2" height="38.4" rx="2.600" fill="#fdfdfd"/><rect x="1.70" y="0.76" width="3.86" height="0.8" fill="#b9b9b9"/><rect x="7.88" y="0.76" width="6.18" height="0.8" fill="#b9b9b9"/><rect x="20.63" y="0.76" width="1.55" height="0.8" fill="#b9b9b9"/><rect x="24.11" y="0.76" width="2.32" height="0.8" fill="#b9b9b9"/><rect x="30.68" y="0.76" width="1.93" height="0.8" fill="#b9b9b9"/><rect x="35.32" y="0.76" width="7.34" height="0.8" fill="#b9b9b9"/><rect x="44.98" y="0.76" width="0.77" height="0.8" fill="#b9b9b9"/><rect x="48.45" y="0.76" width="1.93" height="0.8" fill="#b9b9b9"/><rect x="1.31" y="3.28" width="53.71" height="0.7" fill="#a4a4a4"/><rect x="1.31" y="4.78" width="2.32" height="0.8" fill="#c4c4c4"/><rect x="7.88" y="4.78" width="0.77" height="0.8" fill="#c4c4c4"/><rect x="29.91" y="4.78" width="1.16" height="0.8" fill="#c4c4c4"/><rect x="1.31" y="6.17" width="4.64" height="0.8" fill="#8a8a8a"/><rect x="7.50" y="6.17" width="3.09" height="0.8" fill="#8a8a8a"/><rect x="29.13" y="6.17" width="2.32" height="0.8" fill="#bdbdbd"/><rect x="33.38" y="6.17" width="1.16" height="0.8" fill="#bdbdbd"/><rect x="1.31" y="8.31" width="38.64" height="0.7" fill="#c2c2c2"/><rect x="1.31" y="10.14" width="53.71" height="0.9" fill="#8c8c8c"/><rect x="3.25" y="11.40" width="9.27" height="0.7" fill="#a8a8a8"/><rect x="14.84" y="11.40" width="1.16" height="0.7" fill="#a8a8a8"/><rect x="17.16" y="11.40" width="1.55" height="0.7" fill="#a8a8a8"/><rect x="20.25" y="11.40" width="2.70" height="0.7" fill="#a8a8a8"/><rect x="24.88" y="11.40" width="1.93" height="0.7" fill="#a8a8a8"/><rect x="28.36" y="11.40" width="1.55" height="0.7" fill="#a8a8a8"/><rect x="31.07" y="11.40" width="0.77" height="0.7" fill="#a8a8a8"/><rect x="33.38" y="11.40" width="1.16" height="0.7" fill="#a8a8a8"/><rect x="39.18" y="11.40" width="5.80" height="0.7" fill="#a8a8a8"/><rect x="48.07" y="11.40" width="3.48" height="0.7" fill="#a8a8a8"/><rect x="3.25" y="12.40" width="9.27" height="0.7" fill="#a8a8a8"/><rect x="14.84" y="12.40" width="1.16" height="0.7" fill="#a8a8a8"/><rect x="17.16" y="12.40" width="1.55" height="0.7" fill="#a8a8a8"/><rect x="20.25" y="12.40" width="2.70" height="0.7" fill="#a8a8a8"/><rect x="24.88" y="12.40" width="1.93" height="0.7" fill="#a8a8a8"/><rect x="28.36" y="12.40" width="1.55" height="0.7" fill="#a8a8a8"/><rect x="31.07" y="12.40" width="0.77" height="0.7" fill="#a8a8a8"/><rect x="33.38" y="12.40" width="1.16" height="0.7" fill="#a8a8a8"/><rect x="39.18" y="12.40" width="5.80" height="0.7" fill="#a8a8a8"/><rect x="48.07" y="12.40" width="3.48" height="0.7" fill="#a8a8a8"/><rect x="3.25" y="13.41" width="9.27" height="0.7" fill="#a8a8a8"/><rect x="14.84" y="13.41" width="1.16" height="0.7" fill="#a8a8a8"/><rect x="17.16" y="13.41" width="1.55" height="0.7" fill="#a8a8a8"/><rect x="20.25" y="13.41" width="2.70" height="0.7" fill="#a8a8a8"/><rect x="24.88" y="13.41" width="1.93" height="0.7" fill="#a8a8a8"/><rect x="28.36" y="13.41" width="1.55" height="0.7" fill="#a8a8a8"/><rect x="31.07" y="13.41" width="0.77" height="0.7" fill="#a8a8a8"/><rect x="33.38" y="13.41" width="1.16" height="0.7" fill="#a8a8a8"/><rect x="39.18" y="13.41" width="5.80" height="0.7" fill="#a8a8a8"/><rect x="48.07" y="13.41" width="3.48" height="0.7" fill="#a8a8a8"/><rect x="3.25" y="14.41" width="9.27" height="0.7" fill="#a8a8a8"/><rect x="14.84" y="14.41" width="1.16" height="0.7" fill="#a8a8a8"/><rect x="17.16" y="14.41" width="1.55" height="0.7" fill="#a8a8a8"/><rect x="20.25" y="14.41" width="2.70" height="0.7" fill="#a8a8a8"/><rect x="24.88" y="14.41" width="1.93" height="0.7" fill="#a8a8a8"/><rect x="28.36" y="14.41" width="1.55" height="0.7" fill="#a8a8a8"/><rect x="31.07" y="14.41" width="0.77" height="0.7" fill="#a8a8a8"/><rect x="33.38" y="14.41" width="1.16" height="0.7" fill="#a8a8a8"/><rect x="39.18" y="14.41" width="5.80" height="0.7" fill="#a8a8a8"/><rect x="3.25" y="15.42" width="9.27" height="0.7" fill="#a8a8a8"/><rect x="14.84" y="15.42" width="1.16" height="0.7" fill="#a8a8a8"/><rect x="17.16" y="15.42" width="1.55" height="0.7" fill="#a8a8a8"/><rect x="20.25" y="15.42" width="2.70" height="0.7" fill="#a8a8a8"/><rect x="24.88" y="15.42" width="1.93" height="0.7" fill="#a8a8a8"/><rect x="28.36" y="15.42" width="1.55" height="0.7" fill="#a8a8a8"/><rect x="31.07" y="15.42" width="0.77" height="0.7" fill="#a8a8a8"/><rect x="33.38" y="15.42" width="1.16" height="0.7" fill="#a8a8a8"/><rect x="39.18" y="15.42" width="5.80" height="0.7" fill="#a8a8a8"/><rect x="3.25" y="17.42" width="9.27" height="0.7" fill="#a8a8a8"/><rect x="14.84" y="17.42" width="1.16" height="0.7" fill="#a8a8a8"/><rect x="17.16" y="17.42" width="1.55" height="0.7" fill="#a8a8a8"/><rect x="20.25" y="17.42" width="2.70" height="0.7" fill="#a8a8a8"/><rect x="24.88" y="17.42" width="1.93" height="0.7" fill="#a8a8a8"/><rect x="28.36" y="17.42" width="1.55" height="0.7" fill="#a8a8a8"/><rect x="31.07" y="17.42" width="0.77" height="0.7" fill="#a8a8a8"/><rect x="33.38" y="17.42" width="1.16" height="0.7" fill="#a8a8a8"/><rect x="39.18" y="17.42" width="5.80" height="0.7" fill="#a8a8a8"/><rect x="3.25" y="18.56" width="10.82" height="0.6" fill="#c8c8c8"/><rect x="1.31" y="20.23" width="53.71" height="0.8" fill="#9a9a9a"/><rect x="1.31" y="22.17" width="2.70" height="0.8" fill="#adadad"/><rect x="6.72" y="22.17" width="2.32" height="0.8" fill="#adadad"/><rect x="12.13" y="22.17" width="3.86" height="0.8" fill="#adadad"/><rect x="22.95" y="22.17" width="1.93" height="0.8" fill="#adadad"/><rect x="28.36" y="22.17" width="1.93" height="0.8" fill="#adadad"/><rect x="33.38" y="22.17" width="4.64" height="0.8" fill="#adadad"/><rect x="39.18" y="22.17" width="2.32" height="0.8" fill="#adadad"/><rect x="44.98" y="22.17" width="2.32" height="0.8" fill="#adadad"/><rect x="50.77" y="22.17" width="1.55" height="0.8" fill="#adadad"/><rect x="1.31" y="24.08" width="53.71" height="1.3" fill="#8a8a8a"/><rect x="1.31" y="25.64" width="3.48" height="0.8" fill="#c6c6c6"/><rect x="7.50" y="27.34" width="15.46" height="0.8" fill="#b4b4b4"/><rect x="7.50" y="28.97" width="14.68" height="0.8" fill="#b4b4b4"/><rect x="2.09" y="32.32" width="14.30" height="0.9" fill="#9c9c9c"/><rect x="20.25" y="32.32" width="14.30" height="0.9" fill="#9c9c9c"/><rect x="38.79" y="32.32" width="14.30" height="0.9" fill="#9c9c9c"/></svg>
<span id="aprov" class="t" style="left:37.40px;top:506px;font-size:14px;line-height:18px;color:#f2f2f2;font-weight:400;letter-spacing:-0.002px;">Aprovado , Caio pode produzir</span>
<span id="t1722" class="t" style="left:251.25px;top:513px;font-size:10px;line-height:13px;color:#a6a6a6;font-weight:400;letter-spacing:-0.362px;">17:22</span>
<svg class="a bub" style="left:781px;top:542px" width="108" height="32" viewBox="0 0 108 32"><path d="M0 24 V25 A6 6 0 0 0 6 31 H94 A6 6 0 0 0 100 25 V24Z" fill="rgba(0,0,0,.16)"/><path d="M6 0 H105 Q106.8 0 105.9 1.5 L100 9.5 V24 A6 6 0 0 1 94 30 H6 A6 6 0 0 1 0 24 V6 A6 6 0 0 1 6 0Z" fill="#005c4b"/></svg>
<span id="blz" class="t" style="left:788.60px;top:548px;font-size:14px;line-height:18px;color:#f4f8f7;font-weight:400;letter-spacing:-0.283px;">Blz[</span>
<span id="t1730a" class="t" style="left:832.10px;top:555px;font-size:10px;line-height:13px;color:#a3c4bc;font-weight:400;letter-spacing:-0.251px;">17:30</span>
<svg class="a" style="left:861.5px;top:557.8px" width="13" height="8" viewBox="0 0 13 8"><path d="M0.6 4.5 L2.9 6.8 L7.3 0.8 M5.5 6 L6.5 6.8 L11.2 0.8" fill="none" stroke="#86b6a9" stroke-width="1.2" stroke-linecap="round" stroke-linejoin="round"/></svg>
<svg class="a bub" style="left:692px;top:575px" width="197" height="33" viewBox="0 0 197 33"><path d="M0 25 V26 A6 6 0 0 0 6 32 H183 A6 6 0 0 0 189 26 V25Z" fill="rgba(0,0,0,.16)"/><path d="M6 0 H183 A6 6 0 0 1 189 6 V25 A6 6 0 0 1 183 31 H6 A6 6 0 0 1 0 25 V6 A6 6 0 0 1 6 0Z" fill="#005c4b"/></svg>
<span id="obrig" class="t" style="left:699.25px;top:581px;font-size:14px;line-height:18px;color:#f4f8f7;font-weight:400;letter-spacing:0.073px;">Obrigado Rogerio</span>
<span id="t1730b" class="t" style="left:832.10px;top:588px;font-size:10px;line-height:13px;color:#a3c4bc;font-weight:400;letter-spacing:-0.251px;">17:30</span>
<svg class="a" style="left:861.5px;top:590.8px" width="13" height="8" viewBox="0 0 13 8"><path d="M0.6 4.5 L2.9 6.8 L7.3 0.8 M5.5 6 L6.5 6.8 L11.2 0.8" fill="none" stroke="#86b6a9" stroke-width="1.2" stroke-linecap="round" stroke-linejoin="round"/></svg>
<div class="a" style="left:901px;top:589px;width:2px;height:24px;border-radius:1px;background:#a0a0a0"></div>
</div></div>
<div class="a" style="left:0;top:0;width:906px;height:64px;background:#2b2b2b"></div>
<div class="a" style="left:0;top:64px;width:906px;height:1px;background:#1d1d1d"></div>
<svg class="a" style="left:17.8px;top:12.8px" width="38.4" height="38.4" viewBox="0 0 38.4 38.4">
<defs><clipPath id="hav"><circle cx="19.2" cy="19.2" r="19.2"/></clipPath></defs>
<g clip-path="url(#hav)"><rect width="38.4" height="38.4" fill="#e3e8f2"/>
<rect x=".9" y="-1" width="36.6" height="38.3" fill="#1b4892"/>
<ellipse cx="19.2" cy="16.9" rx="10.3" ry="5" fill="none" stroke="#b4c0dc" stroke-width="1.200"/>
<text x="19.300" y="19.900" text-anchor="middle" font-family="Liberation Serif, serif" font-style="italic" font-weight="700" font-size="8.600" fill="#f1f4fa">RL</text>
<rect x="4.600" y="24.400" width="13.600" height=".8" fill="#7089bf"/><rect x="19.400" y="24.400" width="14.200" height=".8" fill="#7089bf"/>
</g></svg>
<span id="name" class="t" style="left:68.25px;top:14px;font-size:13.8px;line-height:19px;color:#ffffff;font-weight:400;letter-spacing:0.097px;-webkit-text-stroke:.45px #fff;">Rogerio RL Pinturas</span>
<span id="seen" class="t" style="left:69.00px;top:34px;font-size:14px;line-height:18px;color:#cfcfcf;font-weight:400;letter-spacing:0.017px;">visto por último hoje às 17:30</span>
<div class="a" style="left:759px;top:12px;width:96px;height:40px;border-radius:4px;background:#353535"></div>
<div class="a" style="left:807px;top:20px;width:1px;height:24px;background:#404040"></div>
<svg class="a" style="left:774px;top:24px" width="20" height="16" viewBox="0 0 20 16">
<rect x="2.300" y="2.600" width="11.400" height="10.800" rx="2" fill="none" stroke="#fff" stroke-width="1.200"/>
<path d="M13.700 6.600 L17.600 3.800 V12.200 L13.700 9.400" fill="none" stroke="#fff" stroke-width="1.200" stroke-linejoin="round"/></svg>
<svg class="a" style="left:822px;top:22px" width="18" height="20" viewBox="0 0 18 20">
<path d="M6 2.100 C7.600 2 8.600 3.200 9.400 4.900 C10.100 6.400 9.700 7.700 8.500 8.500 C7.500 9.200 7.300 10.100 7.900 11.200 C8.600 12.500 9.500 13.300 10.500 13.700 C11.500 13.900 12 12.600 13.100 12.200 C14.300 12 15.300 13.400 15.100 14.900 C14.900 16.400 14.100 17.300 12.800 17.800 C11.400 18.300 9.600 17.600 7.800 16.100 C6.200 14.700 5.200 13.200 4.400 11.400 C3.500 9.400 3.100 7.400 3.200 5.600 C3.300 3.600 4.400 2.300 6 2.100Z" fill="none" stroke="#fff" stroke-width="1.200" stroke-linejoin="round"/></svg>
<svg class="a" style="left:870px;top:23px" width="18" height="18" viewBox="0 0 18 18">
<circle cx="10.700" cy="7.700" r="4.700" fill="none" stroke="#fff" stroke-width="1.200"/>
<path d="M7.200 11.300 L2.600 15.800" stroke="#fff" stroke-width="1.200" stroke-linecap="round"/></svg>
<div class="a" style="left:0;top:629px;width:906px;height:1px;background:#1d1d1d"></div>
<div class="a" style="left:0;top:630px;width:906px;height:49px;background:#2b2b2b"></div>
<div class="a" style="left:0;top:679px;width:906px;height:1px;background:#414141"></div>
<div class="a" style="left:0;top:680px;width:906px;height:46px;background:#1c1c1c"></div>
<svg class="a" style="left:16px;top:644px" width="18" height="18" viewBox="0 0 18 18">
<circle cx="9" cy="9" r="7.600" fill="none" stroke="#fff" stroke-width="1.100"/>
<path d="M5 11.400 Q9 13.300 13 11.400 Q12 14.100 9 14.100 Q6 14.100 5 11.400Z" fill="#f4f4f4"/>
<path d="M6.400 6.100 V8.900 M5 7.500 H7.800 M11.600 6.100 V8.900 M10.200 7.500 H13" stroke="#fff" stroke-width="1"/></svg>
<svg class="a" style="left:56px;top:640px" width="26" height="26" viewBox="0 0 26 26">
<path d="M6.36 13.43 L12.58 7.21 A3.5 3.5 0 0 1 17.53 12.16 L10.39 19.3 A1.95 1.95 0 0 1 7.64 16.54 L13.69 10.49" fill="none" stroke="#fff" stroke-width="1.3" stroke-linecap="round" stroke-linejoin="round"/></svg>
<div class="a" style="left:105px;top:644px;width:1px;height:18.500px;background:#fff"></div>
<span id="mens" class="t" style="left:106.00px;top:644px;font-size:14px;line-height:18px;color:#9a9a9a;font-weight:400;letter-spacing:-0.179px;">Mensagem</span>
<svg class="a" style="left:871px;top:645px" width="16" height="18" viewBox="0 0 16 18">
<rect x="5.100" y="1.700" width="5.800" height="10.200" rx="2.900" fill="none" stroke="#fff" stroke-width="1.250"/>
<path d="M2.700 9 Q3 14.300 8 14.300 Q13 14.300 13.300 9 M8 14.300 V16.600" fill="none" stroke="#fff" stroke-width="1.250" stroke-linecap="butt"/></svg>
<svg class="a" style="left:714px;top:697px" width="14" height="11" viewBox="0 0 14 11"><path d="M2.300 8.700 L7.100 3.700 L11.900 8.700" fill="none" stroke="#fff" stroke-width="1.600" stroke-linecap="round" stroke-linejoin="round"/></svg>
<svg class="a" style="left:744px;top:695px" width="18" height="15" viewBox="0 0 18 15">
<path d="M1.400 6.200 Q9 -1.200 16.600 6.200" fill="none" stroke="#fff" stroke-width="1.450" stroke-linecap="round"/>
<path d="M4 8.600 Q9 3.800 14 8.600" fill="none" stroke="#fff" stroke-width="1.450" stroke-linecap="round"/>
<path d="M6.400 10.800 Q9 8.400 11.600 10.800" fill="none" stroke="#fff" stroke-width="1.450" stroke-linecap="round"/>
<circle cx="9" cy="12.700" r="1.250" fill="#fff"/></svg>
<svg class="a" style="left:768px;top:695px" width="18" height="15" viewBox="0 0 18 15">
<path d="M1.500 5 H4 L7.700 1.800 V13.200 L4 10 H1.500Z" fill="none" stroke="#fff" stroke-width="1.250" stroke-linejoin="round"/>
<path d="M10 5 Q11.500 7.500 10 10 M12.200 3.200 Q14.800 7.500 12.200 11.800 M14.300 1.400 Q18 7.500 14.300 13.600" fill="none" stroke="#fff" stroke-width="1.250" stroke-linecap="round"/></svg>
<svg class="a" style="left:792px;top:694px" width="18" height="15" viewBox="0 0 18 15">
<rect x="1.700" y="4.800" width="13.400" height="8.600" rx="1.800" fill="none" stroke="#fff" stroke-width="1.300"/>
<path d="M5.200 6.900 H13 V11.300 H3.600Z" fill="#fff"/>
<path d="M15.600 7.400 H17 V10.800 H15.600Z" fill="#fff"/>
<path d="M3.700 .6 L.9 5.600 H3.300 L2.300 9 L6 4.200 H3.800 L5.200 .6Z" fill="#fff" stroke="#1c1c1c" stroke-width=".7"/></svg>
<span id="clock" class="t" style="left:858.35px;top:688px;font-size:11px;line-height:14px;color:#ffffff;font-weight:400;letter-spacing:0.687px;">17:30</span>
<span id="date" class="t" style="left:825.35px;top:704px;font-size:11px;line-height:14px;color:#ffffff;font-weight:400;letter-spacing:0.917px;">15/09/2025</span>
</div>
</body></html>
